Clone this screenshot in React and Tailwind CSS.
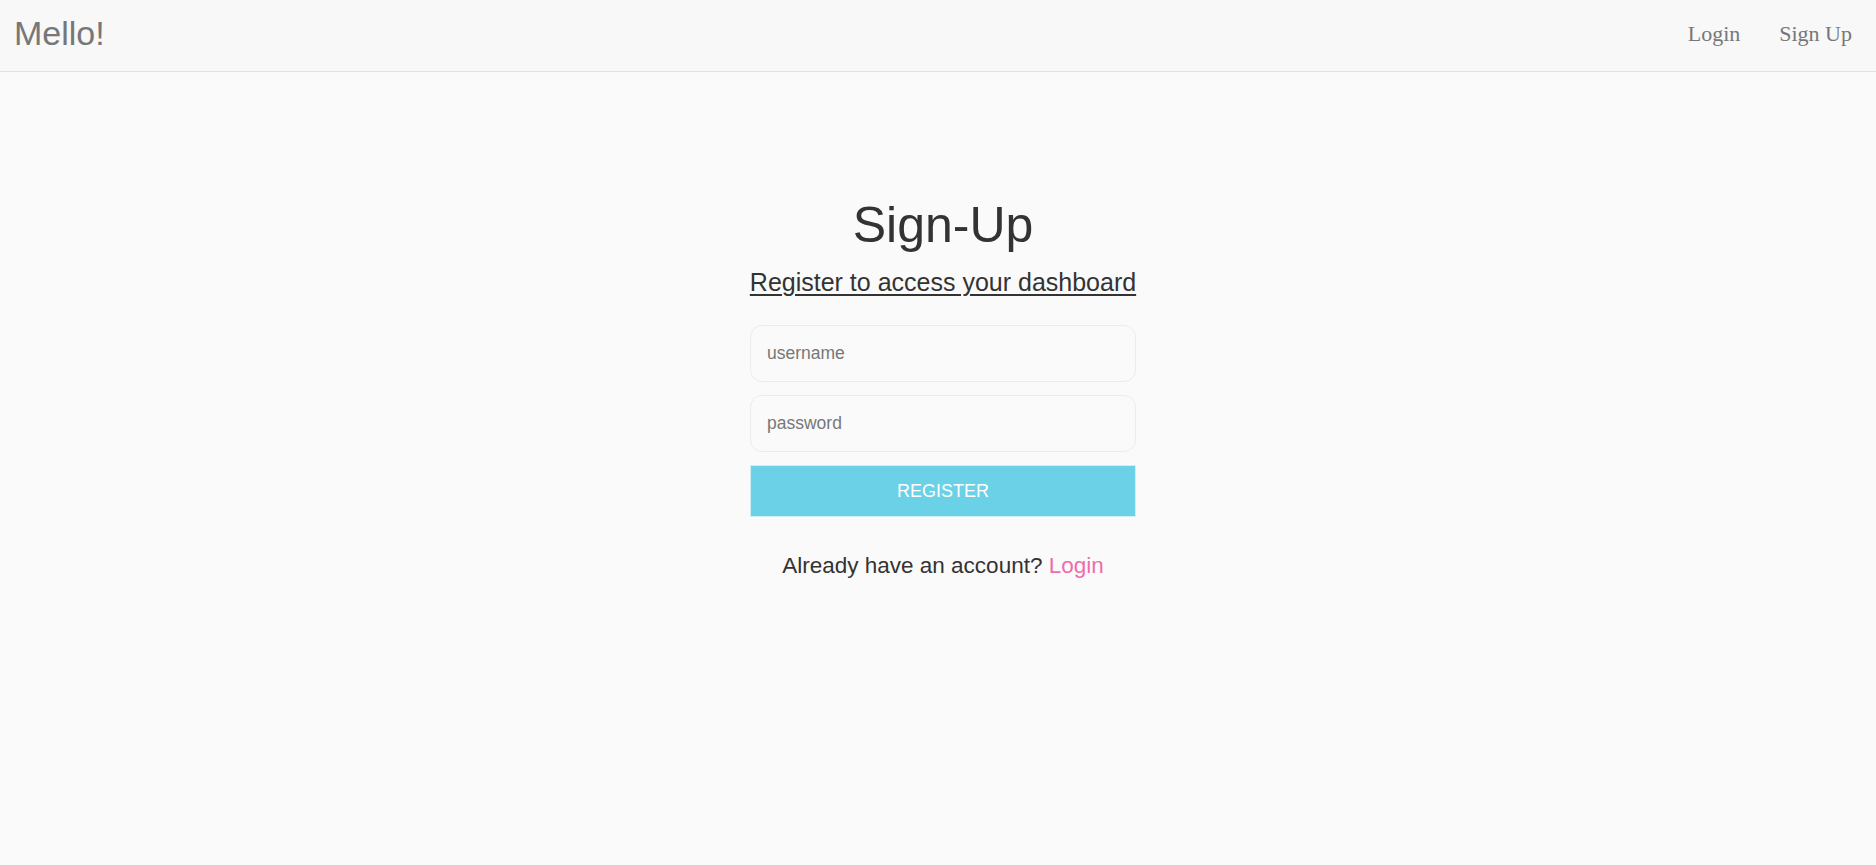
export default function App() {
  return (
    <div className="min-h-screen bg-[#fafafa] text-[#333]" style={{ fontFamily: '"Liberation Sans", Arial, sans-serif' }}>
      <header className="h-[72px] bg-[#f8f8f8] border-b border-[#e3e3e3] flex items-center justify-between pl-[14px] pr-[24px] pb-[5px]">
        <div className="text-[34px] text-[#777] leading-none">Mello!</div>
        <nav className="flex items-center gap-[39px] text-[22px] text-[#777]" style={{ fontFamily: '"Liberation Serif", "Times New Roman", serif' }}>
          <a href="#">Login</a>
          <a href="#">Sign Up</a>
        </nav>
      </header>

      <main className="flex flex-col items-center pt-[128px] pl-[10px]">
        <h1 className="text-[50px] leading-none">Sign-Up</h1>
        <p className="mt-[20px] text-[25px] leading-none underline underline-offset-[3px] decoration-[1.5px]">
          Register to access your dashboard
        </p>

        <form className="mt-[30px] w-[386px] flex flex-col gap-[13px]" onSubmit={(e) => e.preventDefault()}>
          <input
            type="text"
            placeholder="username"
            className="h-[57px] rounded-[12px] border border-[#ececec] bg-[#fafafa] px-[16px] text-[17.5px] placeholder-[#777] outline-none"
          />
          <input
            type="password"
            placeholder="password"
            className="h-[57px] rounded-[12px] border border-[#ececec] bg-[#fafafa] px-[16px] text-[17.5px] placeholder-[#777] outline-none"
          />
          <button type="submit" className="h-[52px] bg-[#6bd1e6] text-white text-[18px] border border-[#d0eef5]">
            REGISTER
          </button>
        </form>

        <p className="mt-[38px] text-[22.5px] leading-none">
          Already have an account? <a href="#" className="text-[#ee6cae]">Login</a>
        </p>
      </main>
    </div>
  );
}
